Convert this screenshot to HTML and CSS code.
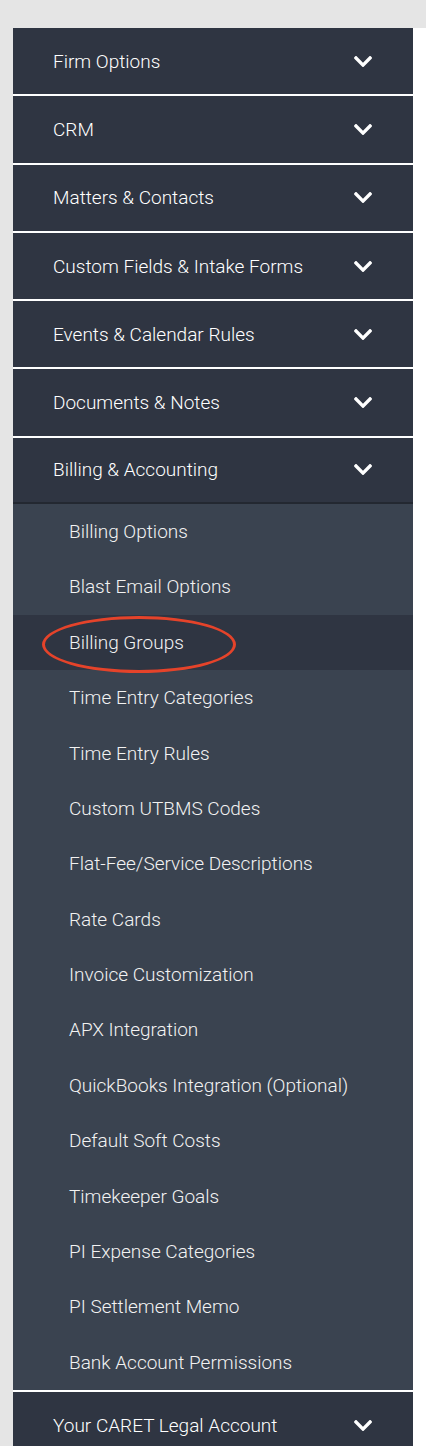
FILE: index.html
```html
<!DOCTYPE html>
<html lang="en">
<head>
    <meta charset="UTF-8">
    <meta name="viewport" content="width=device-width, initial-scale=1.0">
    <title>Settings Menu</title>
    <link rel="stylesheet" href="styles.css">
</head>
<body>
    <div class="top-bar"></div>
    <div class="page">
        <div class="sidebar">
            <nav class="menu">
                <div class="menu-header">Firm Options <svg class="chevron" viewBox="5 123 438 266"><path d="M207 381L13 187c-9-9-9-25 0-34l23-23c9-9 25-9 34 0l154 154 155-154c9-9 25-9 34 0l23 23c9 9 9 25 0 34L241 381c-9 9-25 9-34 0z"/></svg></div>
                <div class="menu-header">CRM <svg class="chevron" viewBox="5 123 438 266"><path d="M207 381L13 187c-9-9-9-25 0-34l23-23c9-9 25-9 34 0l154 154 155-154c9-9 25-9 34 0l23 23c9 9 9 25 0 34L241 381c-9 9-25 9-34 0z"/></svg></div>
                <div class="menu-header">Matters &amp; Contacts <svg class="chevron" viewBox="5 123 438 266"><path d="M207 381L13 187c-9-9-9-25 0-34l23-23c9-9 25-9 34 0l154 154 155-154c9-9 25-9 34 0l23 23c9 9 9 25 0 34L241 381c-9 9-25 9-34 0z"/></svg></div>
                <div class="menu-header">Custom Fields &amp; Intake Forms <svg class="chevron" viewBox="5 123 438 266"><path d="M207 381L13 187c-9-9-9-25 0-34l23-23c9-9 25-9 34 0l154 154 155-154c9-9 25-9 34 0l23 23c9 9 9 25 0 34L241 381c-9 9-25 9-34 0z"/></svg></div>
                <div class="menu-header">Events &amp; Calendar Rules <svg class="chevron" viewBox="5 123 438 266"><path d="M207 381L13 187c-9-9-9-25 0-34l23-23c9-9 25-9 34 0l154 154 155-154c9-9 25-9 34 0l23 23c9 9 9 25 0 34L241 381c-9 9-25 9-34 0z"/></svg></div>
                <div class="menu-header">Documents &amp; Notes <svg class="chevron" viewBox="5 123 438 266"><path d="M207 381L13 187c-9-9-9-25 0-34l23-23c9-9 25-9 34 0l154 154 155-154c9-9 25-9 34 0l23 23c9 9 9 25 0 34L241 381c-9 9-25 9-34 0z"/></svg></div>
                <div class="menu-header open">Billing &amp; Accounting <svg class="chevron" viewBox="5 123 438 266"><path d="M207 381L13 187c-9-9-9-25 0-34l23-23c9-9 25-9 34 0l154 154 155-154c9-9 25-9 34 0l23 23c9 9 9 25 0 34L241 381c-9 9-25 9-34 0z"/></svg></div>
                <ul class="submenu">
                    <li>Billing Options</li>
                    <li>Blast Email Options</li>
                    <li class="active">Billing Groups <span class="circle"></span></li>
                    <li>Time Entry Categories</li>
                    <li>Time Entry Rules</li>
                    <li>Custom UTBMS Codes</li>
                    <li>Flat-Fee/Service Descriptions</li>
                    <li>Rate Cards</li>
                    <li>Invoice Customization</li>
                    <li>APX Integration</li>
                    <li>QuickBooks Integration (Optional)</li>
                    <li>Default Soft Costs</li>
                    <li>Timekeeper Goals</li>
                    <li>PI Expense Categories</li>
                    <li>PI Settlement Memo</li>
                    <li>Bank Account Permissions</li>
                </ul>
                <div class="menu-header">Your CARET Legal Account <svg class="chevron" viewBox="5 123 438 266"><path d="M207 381L13 187c-9-9-9-25 0-34l23-23c9-9 25-9 34 0l154 154 155-154c9-9 25-9 34 0l23 23c9 9 9 25 0 34L241 381c-9 9-25 9-34 0z"/></svg></div>
            </nav>
        </div>
    </div>
</body>
</html>
```

FILE: styles.css
```css
body {
    margin: 0;
    padding: 0;
    background-color: #fff;
    font-family: 'Roboto', 'Helvetica', sans-serif;
    overflow: hidden;
}

.top-bar {
    height: 28px;
    background-color: #e5e5e5;
}

.page {
    display: flex;
}

.sidebar {
    background-color: #e5e5e5;
    padding-left: 13px;
}

.menu {
    width: 400px;
}

.menu-header {
    display: flex;
    justify-content: space-between;
    align-items: center;
    box-sizing: border-box;
    height: 68.3px;
    padding: 0 40px;
    background-color: #2f3542;
    border-bottom: 2px solid #fff;
    color: #fff;
    font-size: 19px;
    font-weight: 300;
}

.menu-header.open {
    height: 66px;
    padding-bottom: 1px;
    border-bottom: 2px solid #232831;
}

.chevron {
    width: 18px;
    height: 11px;
    fill: #fff;
    margin-right: 1px;
}

.submenu {
    list-style: none;
    margin: 0;
    padding: 0;
    background-color: #3a4350;
    border-bottom: 2px solid #fff;
}

.submenu li {
    position: relative;
    display: flex;
    align-items: center;
    height: 55.4px;
    padding-left: 56px;
    color: #f2f2f2;
    font-size: 19px;
    font-weight: 300;
}

.submenu li.active {
    background-color: #2f3542;
}

/* rood ovaal om het actieve item */
.circle {
    position: absolute;
    left: 29px;
    top: 1px;
    width: 194px;
    height: 57px;
    box-sizing: border-box;
    border: 3px solid #e5432a;
    border-radius: 50%;
}
```
